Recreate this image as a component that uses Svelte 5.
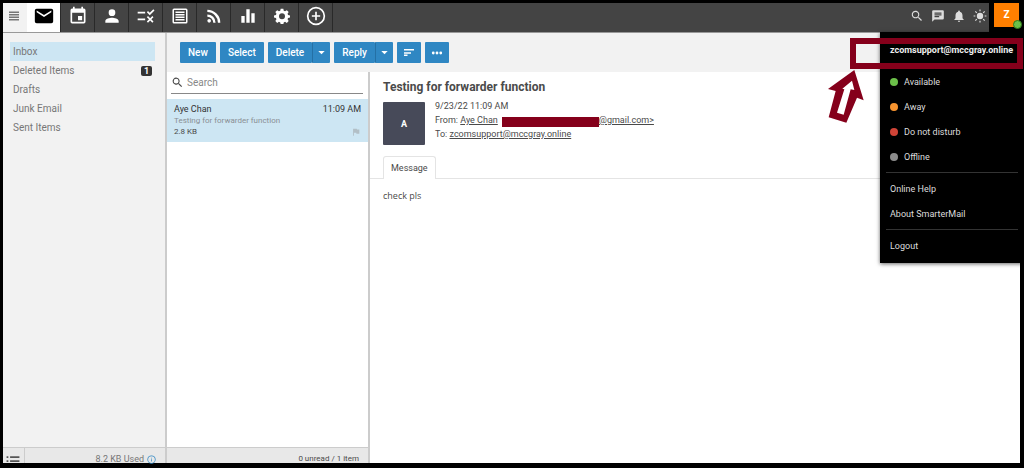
<script lang="ts">
	const apps = [
		{ id: 'mail', label: 'Email' },
		{ id: 'calendar', label: 'Calendar' },
		{ id: 'contacts', label: 'Contacts' },
		{ id: 'tasks', label: 'Tasks' },
		{ id: 'notes', label: 'Notes' },
		{ id: 'rss', label: 'RSS Feeds' },
		{ id: 'reports', label: 'Reports' },
		{ id: 'settings', label: 'Settings' },
		{ id: 'add', label: 'New Item' }
	];
	const tools = [
		{ id: 'search', label: 'Search' },
		{ id: 'chat', label: 'Chat' },
		{ id: 'bell', label: 'Notifications' },
		{ id: 'sun', label: 'Theme' }
	];
	const folders = [
		{ name: 'Inbox', count: 0 },
		{ name: 'Deleted Items', count: 1 },
		{ name: 'Drafts', count: 0 },
		{ name: 'Junk Email', count: 0 },
		{ name: 'Sent Items', count: 0 }
	];
	const statuses = [
		{ name: 'Available', color: '#6cc04a' },
		{ name: 'Away', color: '#f7942f' },
		{ name: 'Do not disturb', color: '#d04437' },
		{ name: 'Offline', color: '#8c8c8c' }
	];

	let activeApp = $state('mail');
	let activeFolder = $state('Inbox');
	let search = $state('');
</script>

{#snippet icon(id: string)}
	<svg class="icon" viewBox="0 0 24 24" fill="currentColor" aria-hidden="true">
		{#if id === 'menu'}
			<path d="M2 3h20v3H2zM2 8h20v3H2zM2 13h20v3H2zM2 18h20v3H2z" />
		{:else if id === 'mail'}
			<path d="M20 4H4a2 2 0 0 0-2 2v12a2 2 0 0 0 2 2h16a2 2 0 0 0 2-2V6a2 2 0 0 0-2-2zm0 4-8 5-8-5V6l8 5 8-5z" />
		{:else if id === 'calendar'}
			<path d="M17 12h-5v5h5zM16 1v2H8V1H6v2H5a2 2 0 0 0-2 2v14a2 2 0 0 0 2 2h14a2 2 0 0 0 2-2V5a2 2 0 0 0-2-2h-1V1zm3 18H5V8h14z" />
		{:else if id === 'contacts'}
			<path d="M12 12a4 4 0 1 0 0-8 4 4 0 0 0 0 8zm0 2c-2.700 0-8 1.300-8 4v2h16v-2c0-2.700-5.300-4-8-4z" />
		{:else if id === 'tasks'}
			<path d="M16.500 11 13 7.400l1.400-1.400 2.100 2.100L20.800 4l1.400 1.400zM11 7H2v2h9zm10 6.400L19.600 12 17 14.600 14.400 12 13 13.400l2.600 2.600-2.600 2.600 1.400 1.400 2.600-2.600 2.600 2.600 1.400-1.400-2.600-2.600zM11 15H2v2h9z" />
		{:else if id === 'notes'}
			<path d="M4 2h16a2 2 0 0 1 2 2v16a2 2 0 0 1-2 2H4a2 2 0 0 1-2-2V4a2 2 0 0 1 2-2zm0 2v16h16V4zm2 2h12v2H6zm0 3.400h12v2H6zm0 3.300h12v2H6zM6 16h12v2H6z" />
		{:else if id === 'rss'}
			<circle cx="6.200" cy="17.800" r="2.200" />
			<path d="M4 4.400v2.900A12.700 12.700 0 0 1 16.700 20h2.900A15.600 15.600 0 0 0 4 4.400zm0 5.700v2.800A7.100 7.100 0 0 1 11.100 20h2.800A9.900 9.900 0 0 0 4 10.100z" />
		{:else if id === 'reports'}
			<path d="M2 12h5v10H2zM9.500 2h5v20h-5zM17 8h5v14h-5z" />
		{:else if id === 'settings'}
			<path fill-rule="evenodd" d="M10 1h4l.6 3 2 .9 2.600-1.700 2.800 2.800-1.700 2.600.8 2 3 .6v3.200l-3 .6-.8 2 1.700 2.600-2.800 2.800-2.600-1.700-2 .9-.6 3h-4l-.6-3-2-.9-2.600 1.700L2 19.600 3.700 17l-.8-2-3-.6v-3.200l3-.6.8-2L2 6l2.800-2.800 2.600 1.700 2-.9zM12 8a4.500 4.500 0 1 0 0 9 4.500 4.500 0 0 0 0-9z" />
		{:else if id === 'add'}
			<path d="M13 7h-2v4H7v2h4v4h2v-4h4v-2h-4zm-1-6a11 11 0 1 0 0 22 11 11 0 0 0 0-22zm0 20a9 9 0 1 1 0-18 9 9 0 0 1 0 18z" />
		{:else if id === 'search'}
			<path d="M15.500 14h-.8l-.3-.3a6.500 6.500 0 1 0-.7.700l.3.300v.8l5 5 1.500-1.500zm-6 0a4.500 4.500 0 1 1 0-9 4.500 4.500 0 0 1 0 9z" />
		{:else if id === 'chat'}
			<path d="M20 2H4a2 2 0 0 0-2 2v18l4-4h14a2 2 0 0 0 2-2V4a2 2 0 0 0-2-2zM6 9h12v2H6zm8 5H6v-2h8zm4-6H6V6h12z" />
		{:else if id === 'bell'}
			<path d="M12 22a2 2 0 0 0 2-2h-4a2 2 0 0 0 2 2zm6-6v-5c0-3.100-1.600-5.600-4.500-6.300V4a1.500 1.500 0 0 0-3 0v.7C7.600 5.400 6 7.900 6 11v5l-2 2v1h16v-1z" />
		{:else if id === 'sun'}
			<circle cx="12" cy="12" r="5.500" />
			<path stroke="currentColor" stroke-width="2" d="M12 1v3M12 20v3M1 12h3M20 12h3M4 4l2.500 2.500M17.500 17.500 20 20M4 20l2.500-2.500M17.500 6.500 20 4" />
		{:else if id === 'caret'}
			<path d="M1 7h22l-11 11z" />
		{:else if id === 'sort'}
			<path d="M2 18h7v-3H2zM2 4v3h20V4zm0 9.500h14v-3H2z" />
		{:else if id === 'more'}
			<circle cx="4.500" cy="12" r="2.800" /><circle cx="12" cy="12" r="2.800" /><circle cx="19.500" cy="12" r="2.800" />
		{:else if id === 'flag'}
			<path d="M14.400 6 14 4H5v17h2v-7h5.600l.4 2h7V6z" />
		{:else if id === 'list'}
			<path d="M1 4h3v3H1zM7 4h16v3H7zM1 10.500h3v3H1zM7 10.500h16v3H7zM1 17h3v3H1zM7 17h16v3H7z" />
		{:else if id === 'info'}
			<path d="M11 17h2v-6h-2zm0-8h2V7h-2zm1-8a11 11 0 1 0 0 22 11 11 0 0 0 0-22zm0 20a9 9 0 1 1 0-18 9 9 0 0 1 0 18z" />
		{/if}
	</svg>
{/snippet}

<div class="app">
	<header class="topbar">
		<button class="menu-btn" aria-label="Toggle folders">{@render icon('menu')}</button>
		<nav class="apps">
			{#each apps as app}
				<button class="app-btn {app.id}" class:active={activeApp === app.id} aria-label={app.label} onclick={() => (activeApp = app.id)}>
					{@render icon(app.id)}
				</button>
			{/each}
		</nav>
		<div class="tools">
			{#each tools as tool}
				<button class="tool-btn" aria-label={tool.label}>{@render icon(tool.id)}</button>
			{/each}
		</div>
		<div class="account">
			<button class="user-btn">Z<span class="presence"></span></button>

			<div class="account-menu">
				<div class="account-name">zcomsupport@mccgray.online</div>
				{#each statuses as status}
					<button class="menu-item">
						<span class="dot" style="background: {status.color}"></span>{status.name}
					</button>
				{/each}
				<hr />
				<a class="menu-item" href="#help">Online Help</a>
				<a class="menu-item" href="#about">About SmarterMail</a>
				<hr />
				<a class="menu-item" href="#logout">Logout</a>
			</div>

			<!-- Callout around the account name -->
			<div class="callout"></div>
			<svg class="arrow" viewBox="0 0 108 162" aria-hidden="true">
				<path fill="#85001b" d="M79 3 107 94 87 86 55 161 2 145 23 66 0 60z" />
				<path fill="#fff" d="M72 35 79 63 68 61 47 137 27 131 49 61 43 59z" />
			</svg>
		</div>
	</header>

	<div class="body">
		<aside class="sidebar">
			<nav class="folders">
				{#each folders as folder}
					<button class="folder" class:active={activeFolder === folder.name} onclick={() => (activeFolder = folder.name)}>
						{folder.name}
						{#if folder.count}<span class="badge">{folder.count}</span>{/if}
					</button>
				{/each}
			</nav>
			<footer class="statusbar">
				<button class="view-btn" aria-label="Folder view">{@render icon('list')}</button>
				<span class="used">8.2 KB Used {@render icon('info')}</span>
			</footer>
		</aside>

		<main class="content">
			<div class="toolbar">
				<button class="btn">New</button>
				<button class="btn">Select</button>
				<div class="split">
					<button class="btn">Delete</button>
					<button class="btn caret" aria-label="Delete options">{@render icon('caret')}</button>
				</div>
				<div class="split">
					<button class="btn">Reply</button>
					<button class="btn caret" aria-label="Reply options">{@render icon('caret')}</button>
				</div>
				<button class="btn square" aria-label="Sort">{@render icon('sort')}</button>
				<button class="btn square" aria-label="More">{@render icon('more')}</button>
			</div>

			<div class="panes">
				<section class="list">
					<label class="search">
						{@render icon('search')}
						<input type="text" placeholder="Search" aria-label="Search" bind:value={search} />
					</label>
					<article class="message">
						<div class="row from"><span>Aye Chan</span><span>11:09 AM</span></div>
						<div class="subject">Testing for forwarder function</div>
						<div class="row size"><span>2.8 KB</span>{@render icon('flag')}</div>
					</article>
					<footer class="statusbar list-status">0 unread / 1 item</footer>
				</section>

				<section class="preview">
					<h1>Testing for forwarder function</h1>
					<div class="meta">
						<div class="avatar">A</div>
						<div class="meta-lines">
							<div>9/23/22 11:09 AM</div>
							<div>From: <a href="#from">Aye Chan<span class="redacted"></span>@gmail.com&gt;</a></div>
							<div>To: <a href="#to">zcomsupport@mccgray.online</a></div>
						</div>
					</div>
					<div class="tabs"><button class="tab">Message</button></div>
					<p class="text">check pls</p>
				</section>
			</div>
		</main>
	</div>
</div>

<style>
	:global(body) {
		margin: 0;
		background: #000;
	}

	.app {
		box-sizing: border-box;
		min-height: 100vh;
		display: flex;
		flex-direction: column;
		border: solid #000;
		border-width: 3px 4px 5px 3px;
		background: #fff;
		color: #4a4a4a;
		font-family: Roboto, sans-serif;
		font-size: 10px;
		line-height: 14px;
	}

	button {
		padding: 0;
		border: 0;
		background: none;
		color: inherit;
		font: inherit;
		cursor: pointer;
	}

	.icon {
		display: block;
		flex: none;
		width: 12px;
		height: 12px;
	}

	/* Top bar */
	.topbar {
		display: flex;
		height: 29px;
		background: #444;
		border-bottom: 1px solid #999;
		color: #fff;
	}

	.menu-btn {
		display: grid;
		place-items: center;
		box-sizing: border-box;
		width: 24px;
		padding-right: 3px;
		padding-bottom: 4px;
		background: #f2f2f2;
		color: #777;
	}

	.apps {
		display: flex;
	}

	.app-btn {
		display: grid;
		place-items: center;
		box-sizing: border-box;
		width: 34px;
		padding-bottom: 4px;
		border-right: 1px solid #292929;
	}

	.app-btn .icon {
		width: 20px;
		height: 20px;
	}

	.app-btn.active {
		background: #fff;
		color: #000;
	}

	.mail .icon {
		width: 22px;
		height: 22px;
	}

	.notes .icon {
		width: 18px;
		height: 18px;
	}

	.reports .icon,
	.settings .icon {
		width: 16px;
		height: 16px;
	}

	.tools {
		display: flex;
		gap: 9px;
		margin-left: auto;
		padding: 0 4px 4px 0;
		color: #ddd;
	}

	.tool-btn {
		width: 12px;
	}

	.tool-btn .icon {
		width: 14px;
		height: 14px;
	}

	.account {
		position: relative;
		box-sizing: border-box;
		width: 31px;
		height: 30px;
		padding-left: 5px;
		background: #000;
	}

	.user-btn {
		position: relative;
		display: block;
		width: 25px;
		height: 24px;
		background: #ff7f00;
		font-weight: 700;
	}

	.presence {
		position: absolute;
		right: -3px;
		bottom: -2px;
		width: 7px;
		height: 7px;
		border: 1px solid #2e7d1c;
		border-radius: 50%;
		background: #6cc04a;
	}

	.account-menu {
		position: absolute;
		top: 29px;
		right: -4px;
		z-index: 1;
		box-sizing: border-box;
		width: 144px;
		padding: 11px 6px 5px;
		background: #000;
		color: #ddd;
		font-size: 9px;
		box-shadow: 0 1px 4px rgba(0, 0, 0, 0.6);
	}

	.account-name {
		margin-bottom: 12px;
		padding-left: 4px;
		color: #eee;
		font-weight: 700;
	}

	.menu-item {
		display: flex;
		align-items: center;
		width: 100%;
		height: 25px;
		padding-left: 4px;
		color: inherit;
		text-decoration: none;
	}

	.dot {
		width: 8px;
		height: 8px;
		margin-right: 6px;
		border-radius: 50%;
	}

	hr {
		margin: 3px 0;
		border: 0;
		border-top: 1px solid #333;
	}

	.callout {
		position: absolute;
		top: 35px;
		right: -3px;
		z-index: 2;
		box-sizing: border-box;
		width: 173px;
		height: 31px;
		border: 6px solid #85001b;
		pointer-events: none;
	}

	.arrow {
		position: absolute;
		top: 66px;
		right: 156px;
		z-index: 2;
		width: 36px;
		height: 54px;
	}

	/* Folders */
	.body {
		flex: 1;
		display: flex;
	}

	.sidebar {
		display: flex;
		flex-direction: column;
		width: 162px;
		border-right: 2px solid #ccc;
		background: #f2f2f2;
		color: #777;
	}

	.folders {
		flex: 1;
		padding: 9px 10px 0 7px;
	}

	.folder {
		display: flex;
		align-items: center;
		justify-content: space-between;
		width: 100%;
		height: 19px;
		padding: 0 3px;
	}

	.folder.active {
		background: #cde6f3;
	}

	.badge {
		width: 11px;
		border-radius: 2px;
		background: #333;
		color: #fff;
		font-size: 9px;
		font-weight: 700;
		line-height: 10px;
	}

	.statusbar {
		display: flex;
		box-sizing: border-box;
		height: 16px;
		border-top: 1px solid #ccc;
		background: #e8e8e8;
		font-size: 9px;
		line-height: 10px;
	}

	.view-btn {
		box-sizing: border-box;
		width: 22px;
		overflow: hidden;
		padding: 6px 0 0 3px;
		border-right: 1px solid #ccc;
		color: #555;
	}

	.view-btn .icon {
		width: 14px;
		height: 14px;
	}

	.used {
		display: flex;
		align-items: center;
		gap: 3px;
		height: 10px;
		margin-left: auto;
		padding: 6px 9px 0 0;
	}

	.used .icon {
		width: 9px;
		height: 9px;
		color: #2f87c3;
	}

	/* Message list and preview */
	.content {
		flex: 1;
		display: flex;
		flex-direction: column;
	}

	.toolbar {
		display: flex;
		gap: 4px;
		padding: 9px 13px;
		background: #f2f2f2;
	}

	.split {
		display: flex;
	}

	.btn {
		height: 21px;
		padding: 0 8px;
		border-radius: 1px;
		background: #2f87c3;
		color: #fff;
		font-weight: 500;
	}

	.caret {
		padding: 0 5px;
		border-left: 1px solid #2470a5;
	}

	.caret .icon {
		width: 7px;
		height: 7px;
	}

	.square {
		padding: 0 6px;
	}

	.panes {
		flex: 1;
		display: flex;
	}

	.list {
		display: flex;
		flex-direction: column;
		width: 201px;
		border-right: 2px solid #ccc;
	}

	.search {
		display: flex;
		align-items: center;
		gap: 3px;
		height: 21px;
		margin: 0 5px 5px 4px;
		border-bottom: 1px solid #888;
	}

	.search .icon {
		width: 13px;
		height: 13px;
	}

	.search input {
		flex: 1;
		min-width: 0;
		padding: 0;
		border: 0;
		outline: none;
		background: none;
		color: inherit;
		font: inherit;
	}

	.search input::placeholder {
		color: #888;
	}

	.message {
		padding: 3px 7px;
		background: #cde6f3;
	}

	.row {
		display: flex;
		align-items: center;
		justify-content: space-between;
	}

	.from {
		color: #333;
		font-size: 9px;
	}

	.subject {
		color: #8a8f93;
		font-size: 8px;
		line-height: 9px;
	}

	.size {
		font-size: 8px;
	}

	.size .icon {
		width: 10px;
		height: 10px;
		color: #b2bfc6;
	}

	.list-status {
		justify-content: flex-end;
		margin-top: auto;
		padding: 6px 9px 0 0;
		font-size: 8px;
	}

	.preview {
		flex: 1;
	}

	h1 {
		margin: 0;
		padding: 6px 13px 0;
		font-size: 12px;
		font-weight: 700;
		line-height: 18px;
	}

	.meta {
		display: flex;
		gap: 10px;
		padding: 3px 13px 0;
		font-size: 9px;
	}

	.avatar {
		display: grid;
		place-items: center;
		width: 42px;
		height: 43px;
		margin-top: 3px;
		border-radius: 1px;
		background: #474a59;
		color: #fff;
		font-weight: 700;
	}

	.meta-lines a {
		color: inherit;
	}

	.redacted {
		display: inline-block;
		width: 97px;
		height: 10px;
		margin-left: 4px;
		vertical-align: -4px;
		background: #85001b;
	}

	.tabs {
		display: flex;
		margin-top: 11px;
		padding: 0 13px;
		border-bottom: 1px solid #e4e4e4;
	}

	.tab {
		height: 23px;
		margin-bottom: -1px;
		padding: 0 7px;
		border: 1px solid #e4e4e4;
		border-bottom: 0;
		border-radius: 3px 3px 0 0;
		background: #fff;
		font-size: 9px;
	}

	.text {
		margin: 0;
		padding: 10px 13px;
		font-family: "Open Sans", sans-serif;
		font-size: 9px;
	}
</style>
